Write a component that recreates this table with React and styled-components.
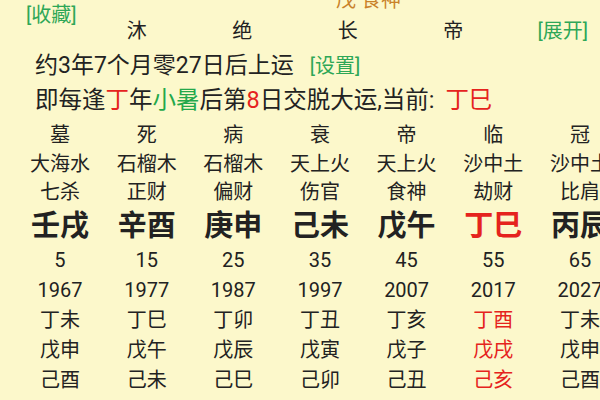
import React from 'react'
import styled, { createGlobalStyle } from 'styled-components'

const GlobalStyle = createGlobalStyle`
	html, body {
		margin: 0;
		padding: 0;
		background: #fcf8cb;
		overflow: hidden;
	}
	body {
		font-family: Roboto, "Noto Sans CJK SC", sans-serif;
		color: #222;
	}
`

const Page = styled.div`
	width: 600px;
	height: 400px;
	overflow: hidden;
	background: #fcf8cb;
`
const Scroller = styled.div`
	margin-top: -10px;
`
const PeekLine = styled.div`
	padding-left: 336px;
	font-size: 20px;
	line-height: 20px;
	height: 20px;
	color: #c9822a;
`
const LinkRow = styled.div`
	padding-left: 26px;
	height: 10px;
	line-height: 10px;
`
const Link = styled.span`
	font-size: 20px;
	color: #2ea757;
	cursor: pointer;
`
const StageRow = styled.div`
	display: grid;
	grid-template-columns: 84px repeat(4, 105.5px) 1fr;
	align-items: center;
	height: 22px;
	line-height: 22px;
	font-size: 20px;
`
const StageCell = styled.span`
	text-align: center;
`
const ExpandCell = styled.span`
	text-align: right;
	padding-right: 12px;
`
const InfoLine = styled.div`
	display: flex;
	align-items: baseline;
	padding-left: 35px;
	font-size: ${p => p.$size || 23}px;
	line-height: 34px;
	margin-top: ${p => p.$top || 0}px;
	white-space: nowrap;
`
const Mark = styled.span`
	color: ${p => (p.$tone === 'green' ? '#24a84a' : '#e5231d')};
	margin-left: ${p => p.$gap || 0}px;
`
const Spacer = styled.span`
	width: 16px;
`
const Table = styled.div`
	margin-top: 4px;
`
const Row = styled.div`
	display: grid;
	grid-template-columns: repeat(7, 86.67px);
	padding-left: 16.67px;
	font-size: ${p => (p.$big ? 29 : 20)}px;
	font-weight: ${p => (p.$big ? 700 : 400)};
	line-height: ${p => p.$h}px;
	white-space: nowrap;
`
const Cell = styled.span`
	text-align: center;
	color: ${p => (p.$hot ? '#e5231d' : '#222')};
`

const columns = [
	{ stage: '墓', nayin: '大海水', god: '七杀', gz: '壬戌', age: 5, year: 1967, a: '丁未', b: '戊申', c: '己酉' },
	{ stage: '死', nayin: '石榴木', god: '正财', gz: '辛酉', age: 15, year: 1977, a: '丁巳', b: '戊午', c: '己未' },
	{ stage: '病', nayin: '石榴木', god: '偏财', gz: '庚申', age: 25, year: 1987, a: '丁卯', b: '戊辰', c: '己巳' },
	{ stage: '衰', nayin: '天上火', god: '伤官', gz: '己未', age: 35, year: 1997, a: '丁丑', b: '戊寅', c: '己卯' },
	{ stage: '帝', nayin: '天上火', god: '食神', gz: '戊午', age: 45, year: 2007, a: '丁亥', b: '戊子', c: '己丑' },
	{ stage: '临', nayin: '沙中土', god: '劫财', gz: '丁巳', age: 55, year: 2017, a: '丁酉', b: '戊戌', c: '己亥', current: true },
	{ stage: '冠', nayin: '沙中土', god: '比肩', gz: '丙辰', age: 65, year: 2027, a: '丁未', b: '戊申', c: '己酉' },
]

// hot rows take the red of the current column
const rows = [
	{ key: 'stage', h: 28.5 },
	{ key: 'nayin', h: 28.5 },
	{ key: 'god', h: 28.5 },
	{ key: 'gz', h: 38, big: true, hot: true },
	{ key: 'age', h: 30 },
	{ key: 'year', h: 30 },
	{ key: 'a', h: 30, hot: true },
	{ key: 'b', h: 30, hot: true },
	{ key: 'c', h: 30, hot: true },
]

const App = () => {
	return (
		<Page>
			<GlobalStyle />
			<Scroller>
				<PeekLine>戊 食神</PeekLine>
				<LinkRow>
					<Link>[收藏]</Link>
				</LinkRow>
				<StageRow>
					<span />
					<StageCell>沐</StageCell>
					<StageCell>绝</StageCell>
					<StageCell>长</StageCell>
					<StageCell>帝</StageCell>
					<ExpandCell>
						<Link>[展开]</Link>
					</ExpandCell>
				</StageRow>
				<InfoLine $top={7}>
					约3年7个月零27日后上运
					<Spacer />
					<Link>[设置]</Link>
				</InfoLine>
				<InfoLine $size={23.5}>
					即每逢<Mark>丁</Mark>年<Mark $tone="green">小暑</Mark>后第<Mark>8</Mark>日交脱大运,当前:&nbsp;
					<Mark $gap={5}>丁巳</Mark>
				</InfoLine>
				<Table>
					{rows.map(r => (
						<Row key={r.key} $big={r.big} $h={r.h}>
							{columns.map(col => (
								<Cell key={col.age} $hot={r.hot && col.current}>
									{col[r.key]}
								</Cell>
							))}
						</Row>
					))}
				</Table>
			</Scroller>
		</Page>
	)
}

export default App
